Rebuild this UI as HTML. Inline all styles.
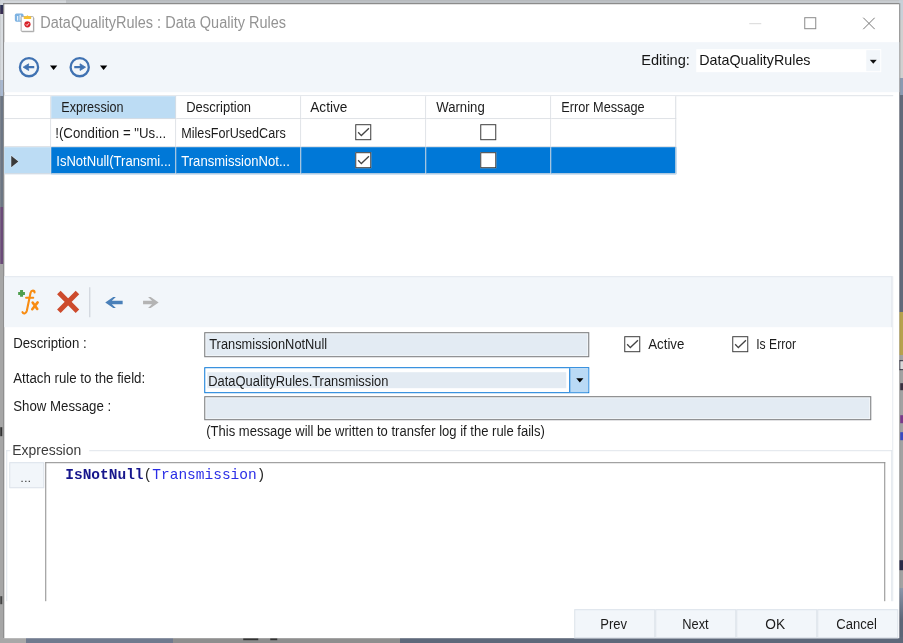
<!DOCTYPE html>
<html>
<head>
<meta charset="utf-8">
<title>DataQualityRules : Data Quality Rules</title>
<style>
html,body{margin:0;padding:0;}
body{width:903px;height:643px;overflow:hidden;position:relative;background:#a4a4a4;font-family:"Liberation Sans",sans-serif;font-size:13.6px;color:#1a1a1a;}
#root{position:absolute;left:-2px;top:-2px;width:907px;height:647px;overflow:hidden;transform:translate(0.25px,0.2px);filter:blur(0.3px);}
#root>*{margin-left:2px;margin-top:2px;}
.abs{position:absolute;}
.t{position:absolute;white-space:nowrap;line-height:1;transform-origin:0 0;}
/* background strips */
#bgtop{left:0;top:0;width:903px;height:4px;background:linear-gradient(90deg,#d2d6da 0,#d2d6da 66px,#bcc0c4 66px,#bcc0c4 700px,#c8ccd0 700px);}
#win{left:3px;top:3px;width:896px;height:635px;background:#fff;box-sizing:border-box;border-left:1px solid #727272;border-top:1px solid #727272;}
#tb1{left:4px;top:42px;width:895px;height:50px;background:#f2f6fa;}
#gridline{left:4px;top:95px;width:889px;height:1px;background:#dfe3e8;}
.hc{position:absolute;top:96px;height:23px;box-sizing:border-box;border-right:1px solid #d9dde2;border-bottom:1px solid #d9dde2;background:#fff;}
.cell{position:absolute;box-sizing:border-box;border-right:1px solid #d9dde2;border-bottom:1px solid #d9dde2;background:#fff;}
.sel{background:#0078d7;border-right-color:#d9dde2;border-bottom-color:#d9dde2;}
.cb{position:absolute;width:16px;height:16px;box-sizing:border-box;border:1px solid #3c3c3c;background:#fff;}
.inp{position:absolute;box-sizing:border-box;border:1px solid #7c7c7c;background:#e3ebf3;box-shadow:inset 0 0 0 1px #f4f7fa;}
.btn{position:absolute;top:609px;height:29px;width:81px;box-sizing:border-box;border:1px solid #dde3ea;background:#f2f6fa;text-align:center;line-height:27px;font-size:13.6px;color:#1a1a1a;}
</style>
</head>
<body>
<div id="root">
<!-- desktop background fragments -->
<div class="abs" id="bgtop"></div>
<div class="abs" style="left:0;top:0;width:4px;height:643px;background:linear-gradient(#d0d6dc 0,#d0d6dc 5px,#2a3458 5px,#3a2a50 14px,#d8dce0 14px,#d8dce0 80px,#a8b8d0 80px,#a8b8d0 96px,#6c7684 96px,#6c7684 207px,#6a4a78 207px,#6a4a78 264px,#a6a6a6 264px);"></div>
<div class="abs" style="left:899px;top:0;width:4px;height:643px;background:linear-gradient(#c8d0d8 0,#c8d0d8 20px,#d0d0d0 20px,#d0d0d0 78px,#8a9ab2 78px,#8a9ab2 95px,#626a7a 95px,#626a7a 312px,#b6a24e 312px,#b6a24e 355px,#a2a2a2 355px,#a2a2a2 588px,#8a96aa 588px,#5c6678 620px,#5c6678 643px);"></div>
<div class="abs" style="left:899px;top:360px;width:4px;height:10px;background:#d8d8d8;border:1px solid #2a2a38;border-right:none;box-sizing:border-box;"></div>
<div class="abs" style="left:900px;top:383px;width:3px;height:7px;background:#3a3040;"></div>
<div class="abs" style="left:900px;top:415px;width:3px;height:8px;background:#7a3a8a;"></div>
<div class="abs" style="left:900px;top:432px;width:3px;height:8px;background:#3a4ac0;"></div>
<div class="abs" style="left:899px;top:560px;width:4px;height:10px;background:#2a2a48;"></div>
<div class="abs" style="left:0;top:427px;width:2px;height:9px;background:#333;"></div>
<div class="abs" style="left:0;top:596px;width:2px;height:8px;background:#444;"></div>
<div class="abs" style="left:0;top:637px;width:903px;height:6px;background:linear-gradient(90deg,#a8a8a8 0,#a8a8a8 26px,#707a8e 26px,#707a8e 173px,#8e8e8e 173px,#8e8e8e 400px,#5e687a 400px);"></div>
<div class="abs" style="left:243px;top:638px;width:15px;height:2px;background:#333;"></div>
<div class="abs" style="left:270px;top:638px;width:7px;height:2px;background:#333;"></div>

<div class="abs" id="win"></div>
<div class="abs" style="left:899px;top:3px;width:1px;height:92px;background:#8c8c8c;"></div>
<div class="abs" style="left:899px;top:95px;width:1px;height:542px;background:rgba(0,0,0,0.08);"></div>

<!-- title bar -->
<svg class="abs" style="left:12px;top:10px" width="26" height="26" viewBox="12 10 26 26">
  <rect x="14.600" y="13.400" width="8.700" height="8.100" rx="1.600" fill="#7db2e2"/>
  <rect x="16.700" y="15.800" width="1.300" height="4.600" fill="#e8f2fb"/><rect x="19.300" y="14.600" width="1.300" height="5.800" fill="#e8f2fb"/>
  <rect x="21.300" y="17.200" width="12.800" height="14.800" rx="1" fill="#9a9a9a" opacity="0.700"/>
  <rect x="20.900" y="16.400" width="12.300" height="14.700" rx="0.800" fill="#fff" stroke="#a4a4a4" stroke-width="0.900"/>
  <path d="M23.500 18.900V16.800Q23.500 16 24.300 16H26L27.200 15L28.400 16H30.100Q30.900 16 30.900 16.800V18.900Z" fill="#f7c232"/>
  <circle cx="27.200" cy="24.100" r="3.100" fill="#d9232a"/>
  <path d="M25.700 24.200l1.100 1.100 1.900-2.300" stroke="#fff" stroke-width="0.900" fill="none"/>
</svg>
<svg class="abs" style="left:745px;top:14px" width="130" height="20" viewBox="0 0 130 20">
  <path d="M4 9.5H16" stroke="#d8d8d8" stroke-width="1"/>
  <rect x="59.5" y="3.5" width="11" height="11" fill="none" stroke="#8a8a8a" stroke-width="1"/>
  <path d="M118.500 3.500L130 15M130 3.500L118.500 15" stroke="#777" stroke-width="1" fill="none" transform="translate(-0.5,0)"/>
</svg>

<!-- toolbar 1 -->
<div class="abs" id="tb1"></div>
<svg class="abs" style="left:0;top:42px" width="130" height="52" viewBox="0 42 130 52">
  <g fill="none" stroke="#4072b2" stroke-width="2.300">
    <circle cx="28.750" cy="66.950" r="9.100"/>
    <circle cx="79.450" cy="66.950" r="9.100"/>
    <path d="M34 66.950H25.500"/>
    <path d="M74 66.950H82.500"/>
  </g>
  <path d="M22.900 66.950L28.400 63.600L28.400 65L27.200 66.950L28.400 68.900L28.400 70.300Z" fill="#4072b2" stroke="#4072b2" stroke-width="0.800" stroke-linejoin="round"/>
  <path d="M85.300 66.950L79.800 63.600L79.800 65L81 66.950L79.800 68.900L79.800 70.300Z" fill="#4072b2" stroke="#4072b2" stroke-width="0.800" stroke-linejoin="round"/>
  <path d="M49.700 65.400h7.300l-3.650 4.300z" fill="#000"/>
  <path d="M99.700 65.400h7.300l-3.650 4.300z" fill="#000"/>
</svg>
<div class="abs" style="left:696px;top:49px;width:185px;height:23px;background:#fff;"></div>
<div class="abs" style="left:866px;top:50px;width:14px;height:21px;background:#f2f6fa;"></div>
<svg class="abs" style="left:869px;top:59px" width="8" height="5" viewBox="0 0 8 5"><path d="M0.500 0.500h7l-3.500 4z" fill="#111"/></svg>

<!-- grid -->
<div class="abs" id="gridline"></div>
<div class="abs" style="left:4px;top:95px;width:1px;height:79px;background:#dfe3e8;"></div>
<div class="hc" style="left:4px;width:47px;"></div>
<div class="hc" style="left:51px;width:125px;background:#bcdcf4;"></div>
<div class="hc" style="left:176px;width:125px;"></div>
<div class="hc" style="left:301px;width:125px;"></div>
<div class="hc" style="left:426px;width:125px;"></div>
<div class="hc" style="left:551px;width:125px;"></div>

<!-- row 1 -->
<div class="cell" style="left:4px;top:119px;width:47px;height:28px;"></div>
<div class="cell" style="left:51px;top:119px;width:125px;height:28px;"></div>
<div class="cell" style="left:176px;top:119px;width:125px;height:28px;"></div>
<div class="cell" style="left:301px;top:119px;width:125px;height:28px;"></div>
<div class="cell" style="left:426px;top:119px;width:125px;height:28px;"></div>
<div class="cell" style="left:551px;top:119px;width:125px;height:28px;"></div>
<div class="cb" style="left:355px;top:124px;"></div>
<svg class="abs" style="left:355px;top:124px" width="16" height="16" viewBox="0 0 16 16"><path d="M2.900 8.100L6.100 11.400L13.700 4.100" stroke="#444" stroke-width="1.350" fill="none"/></svg>
<div class="cb" style="left:480px;top:124px;"></div>

<!-- row 2 (selected) -->
<div class="cell" style="left:4px;top:147px;width:47px;height:27px;background:#bcdcf4;"></div>
<div class="cell sel" style="left:51px;top:147px;width:125px;height:27px;"></div>
<div class="cell sel" style="left:176px;top:147px;width:125px;height:27px;"></div>
<div class="cell sel" style="left:301px;top:147px;width:125px;height:27px;"></div>
<div class="cell sel" style="left:426px;top:147px;width:125px;height:27px;"></div>
<div class="cell sel" style="left:551px;top:147px;width:125px;height:27px;"></div>
<svg class="abs" style="left:8px;top:152px" width="14" height="18" viewBox="8 152 14 18"><path d="M11 155.500L11 167L18.100 161.250Z" fill="#3a3a3a" stroke="#e8f2fb" stroke-width="1" paint-order="stroke"/></svg>
<div class="cb" style="left:355px;top:152px;"></div>
<svg class="abs" style="left:355px;top:152px" width="16" height="16" viewBox="0 0 16 16"><path d="M2.900 8.100L6.100 11.400L13.700 4.100" stroke="#444" stroke-width="1.350" fill="none"/></svg>
<div class="cb" style="left:480px;top:152px;"></div>

<!-- toolbar 2 -->
<div class="abs" style="left:4px;top:276px;width:888px;height:51px;background:#f2f6fa;border-top:1px solid #e3e8ee;border-right:1px solid #e3e8ee;box-sizing:border-box;"></div>
<svg class="abs" style="left:0;top:278px" width="180" height="46" viewBox="0 278 180 46">
  <path d="M21.300 289.800v6.800M17.900 293.200h6.800" stroke="#4f9f4f" stroke-width="3" fill="none"/>
  <path d="M34.300 292.200C34.300 290 31.200 289.600 30.300 292.600L26.600 310.500C25.800 313.800 23 314 22.200 312" stroke="#f88c12" stroke-width="2.100" stroke-linecap="round" fill="none"/>
  <path d="M25.800 297.500H33" stroke="#f88c12" stroke-width="2" stroke-linecap="round" fill="none"/>
  <path d="M32.400 302.400L37 308.800M37.400 302.200L32 309" stroke="#f88c12" stroke-width="2.600" stroke-linecap="round" fill="none"/>
  <path d="M58.600 292.300L77.200 311M77.200 292.300L58.600 311" stroke="#cd4b2d" stroke-width="5" fill="none"/>
  <path d="M89.500 287v30" stroke="#cfd4db" stroke-width="1.200"/>
  <path d="M105 302.300L113 296.700L115.600 296.700L111.600 300.600L122.400 300.600L122.400 304L111.600 304L115.600 307.900L113 307.900Z" fill="#4a80b9"/>
  <path d="M158.400 302.300L150.400 296.700L147.800 296.700L151.800 300.600L142.800 300.600L142.800 304L151.800 304L147.800 307.900L150.400 307.900Z" fill="#b4b4b4"/>
</svg>

<!-- form -->
<div class="inp" style="left:204px;top:332px;width:385px;height:25px;"></div>
<div class="cb" style="left:624px;top:336px;"></div>
<svg class="abs" style="left:624px;top:336px" width="16" height="16" viewBox="0 0 16 16"><path d="M2.900 8.100L6.100 11.400L13.700 4.100" stroke="#444" stroke-width="1.350" fill="none"/></svg>
<div class="cb" style="left:732px;top:336px;"></div>
<svg class="abs" style="left:732px;top:336px" width="16" height="16" viewBox="0 0 16 16"><path d="M2.900 8.100L6.100 11.400L13.700 4.100" stroke="#444" stroke-width="1.350" fill="none"/></svg>

<div class="abs" style="left:204px;top:367px;width:385px;height:26px;box-sizing:border-box;border:1px solid #0a78d7;background:#fff;"></div>
<div class="abs" style="left:207px;top:372px;width:359px;height:16px;background:#e3ebf3;"></div>
<div class="abs" style="left:569px;top:368px;width:19px;height:24px;background:#badaf5;border-left:1px solid #0a78d7;box-sizing:border-box;"></div>
<svg class="abs" style="left:575px;top:377px" width="10" height="6" viewBox="575 377 10 6"><path d="M576 378h7.200l-3.600 4.200z" fill="#000"/></svg>

<div class="inp" style="left:204px;top:396px;width:667px;height:24px;"></div>

<!-- expression group -->
<div class="abs" style="left:892px;top:276px;width:1px;height:325px;background:#e6eaef;"></div>
<div class="abs" style="left:6px;top:450px;width:886px;height:151px;box-sizing:border-box;border:1px solid #e0e5eb;border-bottom:none;"></div>
<div class="abs" style="left:10px;top:448px;width:79px;height:4px;background:#fff;"></div>
<div class="abs" style="left:9px;top:462px;width:35px;height:26px;box-sizing:border-box;border:1px solid #dde3ea;background:#f2f6fa;"></div>
<div class="abs" style="left:45px;top:462px;width:840px;height:139px;box-sizing:border-box;border:1px solid #8c8c8c;border-bottom:none;background:#fff;"></div>

<!-- buttons -->
<div class="btn" style="left:574px;"></div>
<div class="btn" style="left:655px;"></div>
<div class="btn" style="left:736px;"></div>
<div class="btn" style="left:817px;"></div>
<div class="t" id="title" style="left:39.70px;top:14.93px;font-size:15.8px;font-family:'Liberation Sans',sans-serif;color:#939393;transform:scaleX(0.9179);">DataQualityRules : Data Quality Rules</div>
<div class="t" id="edl" style="left:641.10px;top:53.07px;font-size:14.8px;font-family:'Liberation Sans',sans-serif;color:#151515;transform:scaleX(0.9857);">Editing:</div>
<div class="t" id="edv" style="left:698.70px;top:53.07px;font-size:14.8px;font-family:'Liberation Sans',sans-serif;color:#151515;transform:scaleX(0.9661);">DataQualityRules</div>
<div class="t" id="h1" style="left:60.80px;top:99.75px;font-size:14px;font-family:'Liberation Sans',sans-serif;color:#1c1c1c;transform:scaleX(0.8986);">Expression</div>
<div class="t" id="h2" style="left:185.80px;top:99.75px;font-size:14px;font-family:'Liberation Sans',sans-serif;color:#1c1c1c;transform:scaleX(0.9257);">Description</div>
<div class="t" id="h3" style="left:310.00px;top:99.75px;font-size:14px;font-family:'Liberation Sans',sans-serif;color:#1c1c1c;transform:scaleX(0.9737);">Active</div>
<div class="t" id="h4" style="left:435.50px;top:99.75px;font-size:14px;font-family:'Liberation Sans',sans-serif;color:#1c1c1c;transform:scaleX(0.9385);">Warning</div>
<div class="t" id="h5" style="left:560.80px;top:99.75px;font-size:14px;font-family:'Liberation Sans',sans-serif;color:#1c1c1c;transform:scaleX(0.9087);">Error Message</div>
<div class="t" id="r1a" style="left:54.86px;top:126.45px;font-size:14px;font-family:'Liberation Sans',sans-serif;color:#1c1c1c;transform:scaleX(0.9448);">!(Condition = "Us...</div>
<div class="t" id="r1b" style="left:180.80px;top:126.45px;font-size:14px;font-family:'Liberation Sans',sans-serif;color:#1c1c1c;transform:scaleX(0.9017);">MilesForUsedCars</div>
<div class="t" id="r2a" style="left:55.80px;top:153.85px;font-size:14px;font-family:'Liberation Sans',sans-serif;color:#ffffff;transform:scaleX(0.9328);">IsNotNull(Transmi...</div>
<div class="t" id="r2b" style="left:181.30px;top:153.85px;font-size:14px;font-family:'Liberation Sans',sans-serif;color:#ffffff;transform:scaleX(0.9348);">TransmissionNot...</div>
<div class="t" id="l1" style="left:13.30px;top:336.05px;font-size:14px;font-family:'Liberation Sans',sans-serif;color:#1c1c1c;transform:scaleX(0.9429);">Description :</div>
<div class="t" id="v1" style="left:208.70px;top:337.35px;font-size:14px;font-family:'Liberation Sans',sans-serif;color:#1c1c1c;transform:scaleX(0.9171);">TransmissionNotNull</div>
<div class="t" id="c1" style="left:648.10px;top:337.15px;font-size:14px;font-family:'Liberation Sans',sans-serif;color:#1c1c1c;transform:scaleX(0.9474);">Active</div>
<div class="t" id="c2" style="left:755.70px;top:337.15px;font-size:14px;font-family:'Liberation Sans',sans-serif;color:#1c1c1c;transform:scaleX(0.8674);">Is Error</div>
<div class="t" id="l2" style="left:12.80px;top:370.85px;font-size:14px;font-family:'Liberation Sans',sans-serif;color:#1c1c1c;transform:scaleX(0.9468);">Attach rule to the field:</div>
<div class="t" id="v2" style="left:207.50px;top:373.95px;font-size:14px;font-family:'Liberation Sans',sans-serif;color:#1c1c1c;transform:scaleX(0.9214);">DataQualityRules.Transmission</div>
<div class="t" id="l3" style="left:13.30px;top:398.55px;font-size:14px;font-family:'Liberation Sans',sans-serif;color:#1c1c1c;transform:scaleX(0.9456);">Show Message :</div>
<div class="t" id="hp" style="left:205.50px;top:423.75px;font-size:14px;font-family:'Liberation Sans',sans-serif;color:#1c1c1c;transform:scaleX(0.9299);">(This message will be written to transfer log if the rule fails)</div>
<div class="t" id="gl" style="left:12.40px;top:442.85px;font-size:14px;font-family:'Liberation Sans',sans-serif;color:#3c3c3c;transform:scaleX(0.9957);">Expression</div>
<div class="t" id="dots" style="left:19.81px;top:472.69px;font-size:11px;font-family:'Liberation Sans',sans-serif;color:#444;transform:scaleX(1.1875);">...</div>
<div class="t" id="code" style="left:65.10px;top:468.16px;font-size:14.4px;font-family:'Liberation Mono',monospace;color:#222;transform:scaleX(1.0076);"><b style="color:#16168c;">IsNotNull</b><span style="color:#2a2a2a;">(</span><span style="color:#2a2de6;">Transmission</span><span style="color:#2a2a2a;">)</span></div>
<div class="t" id="b1" style="left:600.20px;top:617.45px;font-size:14px;font-family:'Liberation Sans',sans-serif;color:#1c1c1c;transform:scaleX(0.9310);">Prev</div>
<div class="t" id="b2" style="left:681.70px;top:617.45px;font-size:14px;font-family:'Liberation Sans',sans-serif;color:#1c1c1c;transform:scaleX(0.9172);">Next</div>
<div class="t" id="b3" style="left:765.40px;top:617.45px;font-size:14px;font-family:'Liberation Sans',sans-serif;color:#1c1c1c;transform:scaleX(0.9800);">OK</div>
<div class="t" id="b4" style="left:836.20px;top:617.45px;font-size:14px;font-family:'Liberation Sans',sans-serif;color:#1c1c1c;transform:scaleX(0.9318);">Cancel</div>
</div>
</body>
</html>
